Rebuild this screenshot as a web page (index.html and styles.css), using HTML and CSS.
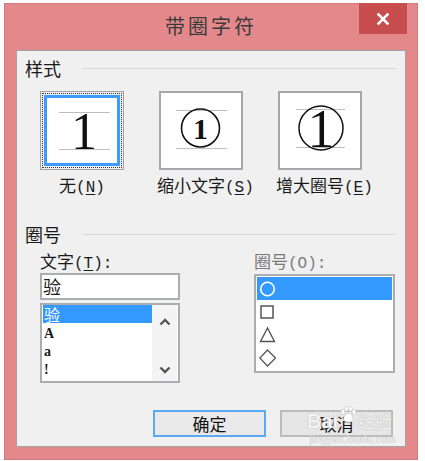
FILE: index.html
```html
<!DOCTYPE html>
<html lang="zh-CN">
<head>
  <meta charset="UTF-8" />
  <meta name="viewport" content="width=device-width, initial-scale=1" />
  <title>带圈字符</title>
  <link rel="stylesheet" href="styles.css">
</head>
<body>

  <div class="window">
    <div class="titlebar">
      <span></span>
      <h1 class="title">带圈字符</h1>
      <button class="close" aria-label="关闭">
        <svg width="12" height="12" viewBox="0 0 12 12"><path d="M1.5 1.5 L10.5 10.5 M10.5 1.5 L1.5 10.5" stroke="#fff" stroke-width="2.6" stroke-linecap="square"/></svg>
      </button>
    </div>

    <div class="client">
      <div class="group-head"><span>样式</span><i class="rule"></i></div>

      <div class="styles">
        <div class="option option-center">
          <div class="box box-selected">
            <div class="focus">
              <div class="sel">
                <svg width="74" height="69" viewBox="0 0 74 69">
                  <line x1="12" y1="14.5" x2="63" y2="14.5" stroke="#bdbdbd"/>
                  <line x1="12" y1="51.5" x2="63" y2="51.5" stroke="#bdbdbd"/>
                  <text x="37" y="51" class="digit" font-size="52">1</text>
                </svg>
              </div>
            </div>
          </div>
          <div class="opt-label">无<span class="mn">(<u>N</u>)</span></div>
        </div>

        <div class="option">
          <div class="box">
            <svg width="80" height="75" viewBox="0 0 80 75">
              <line x1="15" y1="17.5" x2="66" y2="17.5" stroke="#bdbdbd"/>
              <line x1="15" y1="55.5" x2="66" y2="55.5" stroke="#bdbdbd"/>
              <circle cx="39.5" cy="35" r="19" fill="none" stroke="#111" stroke-width="1.6"/>
              <text x="39.5" y="46" class="digit digit-bold" font-size="30">1</text>
            </svg>
          </div>
          <div class="opt-label">缩小文字<span class="mn">(<u>S</u>)</span></div>
        </div>

        <div class="option">
          <div class="box">
            <svg width="80" height="75" viewBox="0 0 80 75">
              <line x1="16" y1="16.5" x2="65" y2="16.5" stroke="#bdbdbd"/>
              <line x1="16" y1="54.5" x2="65" y2="54.5" stroke="#bdbdbd"/>
              <circle cx="41" cy="35" r="22" fill="none" stroke="#111" stroke-width="1.5"/>
              <text x="41" y="54" class="digit" font-size="54">1</text>
            </svg>
          </div>
          <div class="opt-label">增大圈号<span class="mn">(<u>E</u>)</span></div>
        </div>
      </div>

      <div class="group-head group-second"><span>圈号</span><i class="rule"></i></div>

      <div class="enclosure">
        <div class="col col-text">
          <div class="field-label">文字<span class="mn">(<u>T</u>):</span></div>
          <div class="textbox">验</div>
          <div class="listbox">
            <ul class="items">
              <li class="active">验</li>
              <li class="latin">A</li>
              <li class="latin">a</li>
              <li class="latin">!</li>
            </ul>
            <div class="scrollbar">
              <svg width="12" height="8" viewBox="0 0 12 8"><path d="M1.5 6.5 L6 2 L10.5 6.5" fill="none" stroke="#555" stroke-width="2.4"/></svg>
              <svg width="12" height="8" viewBox="0 0 12 8"><path d="M1.5 1.5 L6 6 L10.5 1.5" fill="none" stroke="#555" stroke-width="2.4"/></svg>
            </div>
          </div>
        </div>

        <div class="col col-shape">
          <div class="field-label disabled">圈号<span class="mn">(O):</span></div>
          <ul class="listbox shapes">
            <li class="active">
              <svg width="18" height="18" viewBox="0 0 18 18"><circle cx="8.5" cy="9" r="6.8" fill="none" stroke="#fff" stroke-width="1.6"/></svg>
            </li>
            <li>
              <svg width="18" height="18" viewBox="0 0 18 18"><rect x="2" y="3" width="12" height="12" fill="none" stroke="#555" stroke-width="1.5"/></svg>
            </li>
            <li>
              <svg width="18" height="18" viewBox="0 0 18 18"><path d="M8.5 2 L15.5 15.5 L1.5 15.5 Z" fill="none" stroke="#555" stroke-width="1.4"/></svg>
            </li>
            <li>
              <svg width="18" height="18" viewBox="0 0 18 18"><path d="M8.5 1 L16.5 9 L8.5 17 L0.8 9 Z" fill="none" stroke="#555" stroke-width="1.3"/></svg>
            </li>
          </ul>
        </div>
      </div>

      <div class="actions">
        <button class="btn btn-default">确定</button>
        <button class="btn">取消</button>
      </div>

      <!-- baidu watermark over the cancel button -->
      <div class="watermark">
        <div class="wm-top">
          <span>Bai</span>
          <svg width="18" height="17" viewBox="0 0 18 17">
            <g fill="#fff" stroke="#ccc" stroke-width="0.8">
              <ellipse cx="4" cy="6" rx="2" ry="2.6"/>
              <ellipse cx="7.5" cy="2.8" rx="2" ry="2.4"/>
              <ellipse cx="11.5" cy="2.8" rx="2" ry="2.4"/>
              <ellipse cx="15" cy="6" rx="2" ry="2.6"/>
              <path d="M9.5 7.5 C6 7.5 4 12 5 14.5 C6 16.5 13 16.5 14 14.5 C15 12 13 7.5 9.5 7.5 Z"/>
            </g>
          </svg>
          <span>经验</span>
        </div>
        <div class="wm-url">jingyan.baidu.com</div>
      </div>
    </div>
  </div>

</body>
</html>
```

FILE: styles.css
```css
body {
  margin: 0;
  background: #ffffff;
  font-family: "Noto Sans CJK SC", "Liberation Sans", sans-serif;
  color: #1a1a1a;
}
ul {
  list-style: none;
  margin: 0;
  padding: 0;
}

.window {
  box-sizing: border-box;
  width: 414px;
  height: 457px;
  margin: 3px 0 0 4px;
  padding: 0 11px 12px;
  background: #e4898b;
  border: 1px solid #cf7a7c;
  display: flex;
  flex-direction: column;
}

/* title bar */
.titlebar {
  height: 46px;
  display: grid;
  grid-template-columns: 48px 1fr 48px;
  align-items: start;
}
.title {
  margin: 0;
  text-align: center;
  font-size: 20px;
  font-weight: normal;
  line-height: 44px;
  letter-spacing: 3px;
  color: #3a3a3a;
}
.close {
  width: 48px;
  height: 31px;
  margin-top: -1px;
  margin-left: 1px;
  border: none;
  padding: 0;
  background: #c74d4f;
  display: flex;
  align-items: center;
  justify-content: center;
}

/* dialog body */
.client {
  position: relative;
  flex: 1;
  background: #f0f0f0;
  border: 1px solid #a3a3a3;
  padding: 7px 9px 0 8px;
}
.group-head {
  display: flex;
  align-items: center;
  gap: 21px;
  height: 20px;
  font-size: 18px;
}
.rule {
  flex: 1;
  height: 1px;
  margin-top: 1px;
  background: #d9d9d9;
}
.group-second {
  margin-top: 28px;
}

/* style options */
.styles {
  display: flex;
  gap: 35px;
  margin-top: 13px;
  padding-left: 15px;
}
.option {
  width: 84px;
  display: flex;
  flex-direction: column;
}
.box {
  box-sizing: border-box;
  width: 84px;
  height: 79px;
  border: 2px solid #a6a8ab;
  background: #fff;
}
.box svg {
  display: block;
}
.box-selected {
  border: 1px solid #a0a0a0;
  padding: 1px;
  background: #f0f0f0;
}
.focus {
  height: 100%;
  box-sizing: border-box;
  border: 1px dotted #333;
  padding: 1px;
}
.sel {
  height: 100%;
  box-sizing: border-box;
  border: 3px solid #3c9cfd;
  background: #fff;
}
.digit {
  font-family: "Liberation Serif", serif;
  text-anchor: middle;
  fill: #111;
}
.digit-bold {
  font-weight: bold;
}
.opt-label {
  height: 22px;
  margin-top: 4px;
  margin-left: -2px;
  line-height: 22px;
  font-size: 17px;
  white-space: nowrap;
}
.option-center .opt-label {
  margin-left: 0;
  text-align: center;
}
.mn {
  font-family: "Liberation Mono", monospace;
  font-size: 16px;
  line-height: 1;
}
u {
  text-underline-offset: 2px;
}

/* enclosure section */
.enclosure {
  display: flex;
  justify-content: space-between;
  margin-top: 7px;
  padding: 0 1px 0 15px;
}
.col-text {
  width: 140px;
}
.col-shape {
  width: 141px;
}
.field-label {
  height: 20px;
  line-height: 20px;
  font-size: 17px;
  white-space: nowrap;
}
.disabled {
  color: #7a7a7a;
}
.textbox {
  box-sizing: border-box;
  height: 27px;
  margin-top: 2px;
  padding-left: 1px;
  border: 2px solid #abadb0;
  background: #fff;
  font-size: 18px;
  line-height: 22px;
}
.listbox {
  box-sizing: border-box;
  margin-top: 3px;
  border: 2px solid #abadb0;
  background: #fff;
}
.col-text .listbox {
  height: 80px;
  display: flex;
  padding: 0 1px;
  overflow: hidden;
}
.items {
  width: 109px;
}
.items li {
  height: 18px;
  line-height: 18px;
  font-size: 16px;
  padding-left: 1px;
}
.items .latin {
  font-family: "Liberation Serif", serif;
  font-weight: bold;
  font-size: 14px;
  line-height: 22px;
}
.items .active {
  background: #3399ff;
  color: #fff;
}
.scrollbar {
  width: 25px;
  background: #f4f4f4;
  display: flex;
  flex-direction: column;
  align-items: center;
  justify-content: space-between;
  padding: 13px 0 7px;
}
.scrollbar svg {
  display: block;
}
.shapes {
  height: 99px;
  padding: 1px;
}
.shapes li {
  height: 23px;
  display: flex;
  align-items: center;
  padding-left: 2px;
}
.shapes .active {
  background: #3399ff;
}

/* buttons */
.actions {
  display: flex;
  justify-content: flex-end;
  gap: 14px;
  margin-top: 27px;
  padding-right: 3px;
}
.btn {
  box-sizing: border-box;
  width: 113px;
  height: 27px;
  border: 2px solid #bcbcbc;
  background: #e6e6e6;
  font-family: "Noto Sans CJK SC", sans-serif;
  font-size: 17px;
  line-height: 20px;
  color: #111;
  padding: 0;
}
.btn-default {
  border-color: #5aa9f4;
  background: #e9e9e9;
}

.watermark {
  position: absolute;
  left: 290px;
  top: 355px;
  color: rgba(255, 255, 255, 0.85);
  text-shadow: 0 0 1px #b8b8b8, 0 0 1px #b8b8b8;
  pointer-events: none;
}
.wm-top {
  display: flex;
  align-items: flex-end;
  gap: 1px;
  font-family: "Liberation Sans", sans-serif;
  font-weight: bold;
  font-size: 20px;
  line-height: 22px;
}
.wm-top span:last-child {
  font-family: "Noto Sans CJK SC", sans-serif;
  font-weight: normal;
  font-size: 17px;
}
.wm-top svg {
  margin-bottom: 9px;
}
.wm-url {
  margin-top: 3px;
  font-family: "Liberation Sans", sans-serif;
  font-size: 10px;
  line-height: 10px;
  letter-spacing: 0.3px;
  padding-left: 3px;
}
```
